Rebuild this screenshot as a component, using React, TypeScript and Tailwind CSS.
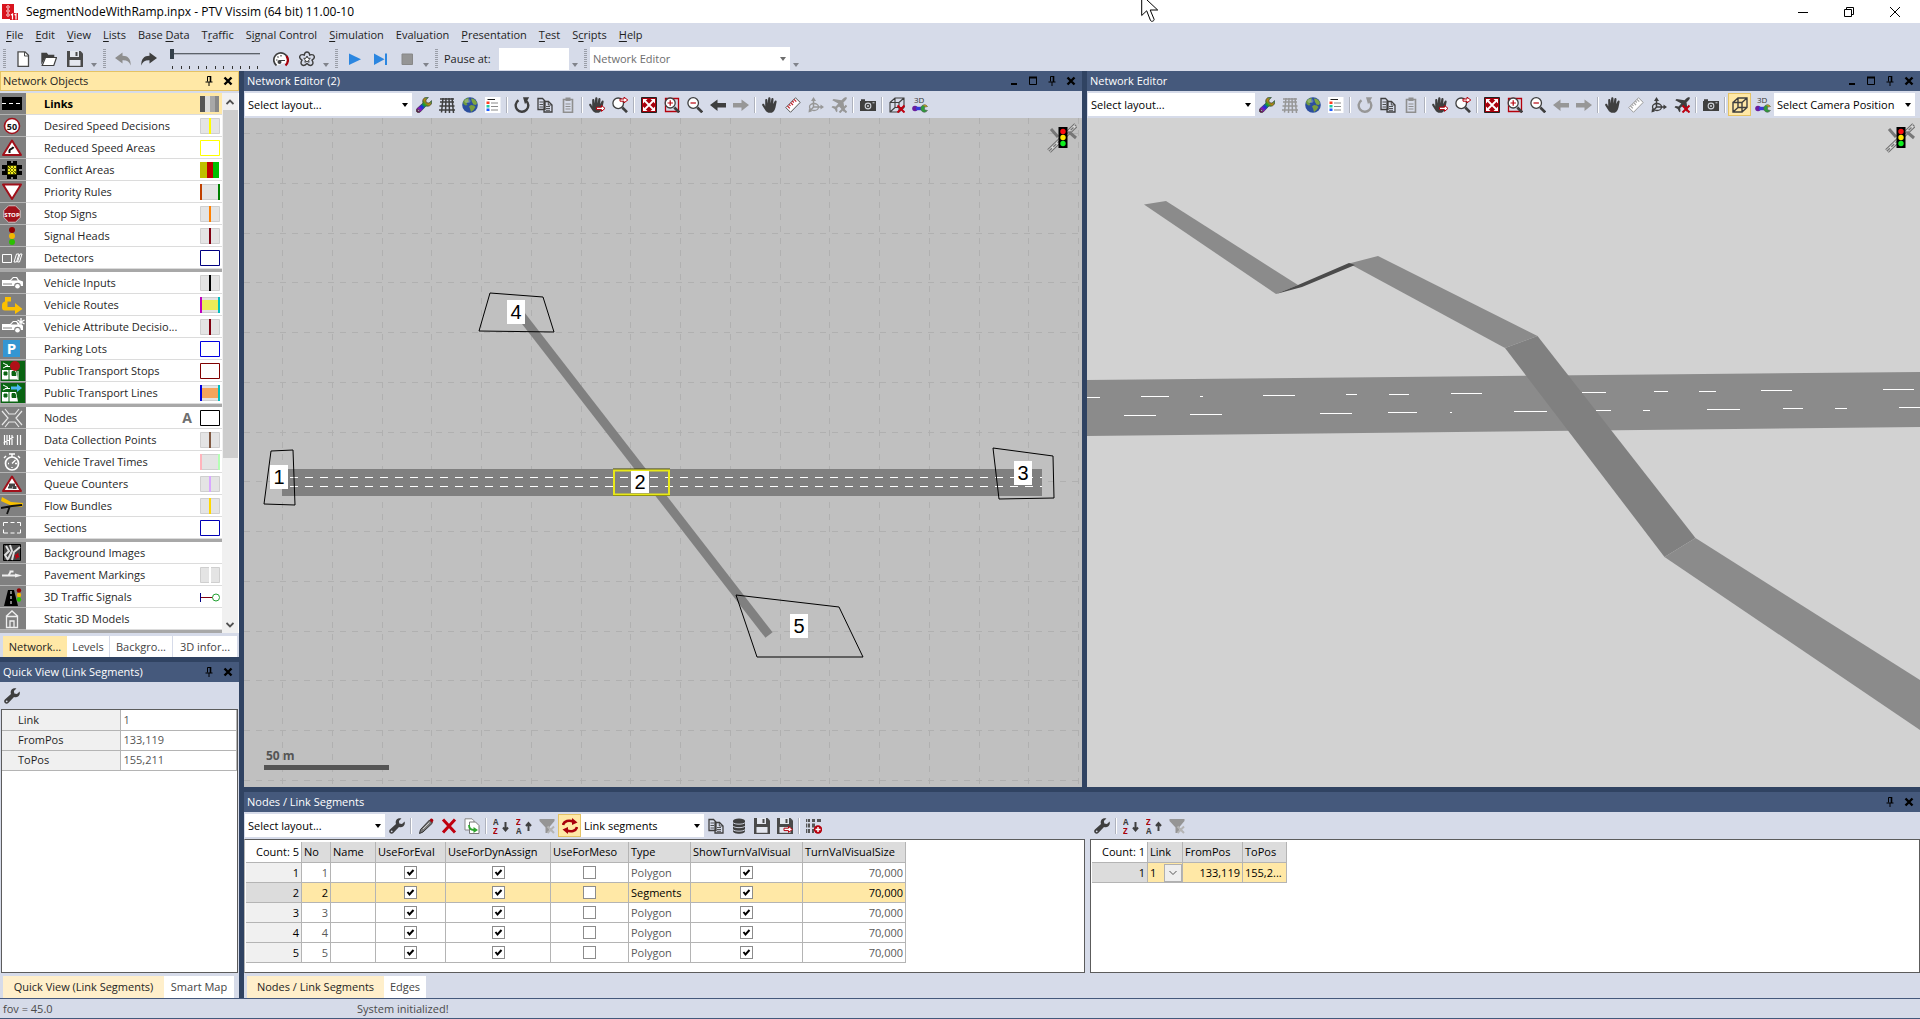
import React from 'react';

type IconProps = { children: React.ReactNode; box?: string; className?: string };

const Icon: React.FC<IconProps> = ({ children, box = '0 0 16 16', className = 'w-4 h-4' }) => (
    <svg viewBox={box} className={`${className} block shrink-0`} fill="none" aria-hidden="true">
        {children}
    </svg>
);

const DARK = '#3f3f3f';
const RED = '#a8000b';

/* ---------- toolbar icons ---------- */

const WRENCH = 'M15.6 3.6 13 6.1 10.3 5.6 9.9 3 12.4.5C10.600-.2 8.600.2 7.500 1.700c-1 1.300-1 3-.5 4.300L.9 11.600c-1 1-1 2.400 0 3.400s2.500 1 3.400 0L10 9c1.500.5 3.200.3 4.400-.8 1.300-1.200 1.700-3 1.200-4.600ZM2.700 14.200a.9.9 0 1 1 0-1.800.9.900 0 0 1 0 1.800Z';

const WrenchIcon = () => <Icon><path d={WRENCH} fill={DARK} /></Icon>;

const ColorWrenchIcon = () => (
    <Icon>
        <defs>
            <linearGradient id="rainbow" x1="1" y1="15" x2="14" y2="2" gradientUnits="userSpaceOnUse">
                <stop offset="0" stopColor="#502020" />
                <stop offset=".2" stopColor="#9010c0" />
                <stop offset=".4" stopColor="#1530e0" />
                <stop offset=".55" stopColor="#10a030" />
                <stop offset=".75" stopColor="#c08010" />
                <stop offset="1" stopColor="#20a050" />
            </linearGradient>
        </defs>
        <path d={WRENCH} fill="url(#rainbow)" stroke="#333" strokeWidth=".6" />
    </Icon>
);

const NetGridIcon = ({ color = DARK }: { color?: string }) => (
    <Icon>
        <path d="M1 2h14M1 5h14M.5 9h15M0 13h16M4 1 2.500 15.500M7 1l-.5 15M10 1l.5 15M13 1l1.500 15" stroke={color} strokeWidth="1.500" />
    </Icon>
);

const GlobeIcon = () => (
    <Icon>
        <circle cx="8" cy="8" r="7.800" fill="#2c4f9e" />
        <path d="M1 4.500C3 1.500 5.500.6 7 1.200L6 3l1 1.500L4.500 6l1 2-2 .5L1.500 7Z" fill="#6f9a3c" />
        <path d="M9 1.500c3 0 5 2 6 4.500l-1 2-2.500-.5L10 5Z" fill="#7fa640" />
        <path d="m9 8 3 .5 1.500 1.500-2 3L9 15l-1-3.500-1-2Z" fill="#7a9e3e" />
        <ellipse cx="5.500" cy="4" rx="3" ry="2" fill="#fff" opacity=".25" />
    </Icon>
);

const LegendIcon = () => (
    <Icon>
        <path d="M0 0h15.500v16H0z" fill="#fff" />
        <path d="M2.500 2.500H10" stroke="#222" />
        <path d="M1.500 4.500h3v2.500h-3z" fill="#ff3b1f" />
        <path d="M1.500 8h3v2.500h-3z" fill="#1fc9a0" />
        <path d="M1.500 11.500h3V14h-3z" fill="#1f5bff" />
        <path d="M6 6h7M6 9.500h7M6 13h7" stroke="#8a8a8a" />
    </Icon>
);

const RefreshIcon = ({ color = DARK }: { color?: string }) => (
    <Icon>
        <path d="M4.500 3.200A6.300 6.300 0 1 0 12 3.600" stroke={color} strokeWidth="2.400" />
        <path d="M9 .3h6.200L11 7.200Z" fill={color} />
    </Icon>
);

const CopyIcon = ({ color = DARK }: { color?: string }) => (
    <Icon>
        <path d="M1 1.500h4.500L8 4v8.500H1zM7 4.500h4.500l3.500 3.500v7H7z" fill="#d6dbe9" stroke={color} strokeWidth="1.300" />
        <path d="M2.500 5H6M2.500 7.500H6M2.500 10H6M9 9.500h4M9 11.500h4M9 13.300h4M11.300 5v3H15" stroke={color} strokeWidth=".9" />
    </Icon>
);

const ClipboardIcon = () => (
    <Icon>
        <path d="M3.500 2.500h9v12.700h-9z" stroke="#8f8f8f" strokeWidth="1.600" />
        <path d="M5.500.5h5V4h-5z" fill="#8f8f8f" />
        <path d="M5.500 7h5M5.500 9.500h5M5.500 12h5" stroke="#8f8f8f" />
    </Icon>
);

const HAND = 'M3.200 9.500V3c0-1.500 2.100-1.500 2.200 0l.3 3.500L6.200 1.500c.1-1.600 2.200-1.600 2.300 0l.2 4.900.6-4.500c.3-1.500 2.300-1.200 2.200.3l-.3 4.900 1.400-2.900c.6-1.300 2.400-.6 2 .8-.7 2.600-.6 5.100-1.900 7.700-.8 1.900-2.200 3.100-4.500 3.100-2.700 0-4-1.200-5-2.900L.3 8.500C-.5 7.100 1.200 6 2.100 7.100Z';

const HandIcon = () => <Icon><path d={HAND} fill={DARK} /></Icon>;

const HandSyncIcon = () => (
    <Icon>
        <path d={HAND} fill={DARK} />
        <path d="M7.500 10.200h5V8.400l3.500 3-3.500 3v-1.800H7.500z" fill="#fff" stroke="#b5000c" />
    </Icon>
);

const ZoomSyncIcon = () => (
    <Icon>
        <circle cx="6.200" cy="6.300" r="5.300" fill="#fff" stroke={DARK} strokeWidth="1.300" />
        <path d="m10.300 10.500 4.700 4.700" stroke={DARK} strokeWidth="2.600" />
        <path d="M8 2h4V.2L15.800 3 12 5.800V4.200H8z" fill="#fff" stroke="#b5000c" />
    </Icon>
);

const FitIcon = () => (
    <Icon>
        <path d="M.5.5h15v15H.5z" fill={RED} stroke="#222" />
        <path d="m4 4 8 8M12 4l-8 8" stroke="#fff" strokeWidth="1.800" />
        <path d="M2 2h4.500L2 6.500ZM14 2v4.500L9.500 2ZM2 14V9.500L6.500 14ZM14 14H9.500L14 9.500Z" fill="#fff" />
    </Icon>
);

const ZoomInIcon = () => (
    <Icon>
        <path d="M1.500 1.500h13v13h-13z" stroke="#b5000c" strokeWidth="1.300" />
        <circle cx="6.200" cy="6" r="5" fill="#fff" stroke={DARK} strokeWidth="1.300" />
        <path d="M6.200 3.300v5.400M3.500 6h5.400" stroke="#b5000c" strokeWidth="1.200" />
        <path d="m10.300 10.500 4.900 4.900" stroke={DARK} strokeWidth="2.600" />
    </Icon>
);

const ZoomOutIcon = () => (
    <Icon>
        <circle cx="6.200" cy="6" r="5.300" fill="#fff" stroke={DARK} strokeWidth="1.300" />
        <path d="M3.500 6h5.400" stroke="#b5000c" strokeWidth="1.200" />
        <path d="m10.300 10.500 4.900 4.900" stroke={DARK} strokeWidth="2.600" />
    </Icon>
);

const BackIcon = ({ color = DARK }: { color?: string }) => (
    <Icon><path d="M0 8 7.500 2.500V6H16v4.500H7.500V14Z" fill={color} /></Icon>
);

const ForwardIcon = () => (
    <Icon><path d="M16 8 8.500 2.500V6H0v4.500h8.500V14Z" fill="#979797" /></Icon>
);

const RulerIcon = ({ off = false }: { off?: boolean }) => (
    <Icon>
        <path d="M10.500.8 15.200 5.400 5.500 15.300.8 10.600Z" fill="#fff" stroke={off ? '#999' : '#555'} />
        <path d="m9 2.300 2.300 2.300M7.300 4l1.500 1.500M5.700 5.700 8 8M4 7.400l1.500 1.500M2.500 9l2.300 2.300" stroke={off ? '#a5a5a5' : '#c4202b'} strokeWidth="1.200" />
    </Icon>
);

const AxesIcon = ({ color = '#979797' }: { color?: string }) => (
    <Icon>
        <path d="M5.500 2v8M5.500 10H14M5.500 10 2 14" stroke={color} strokeWidth="1.500" />
        <path d="M5.500 0 8 4H3ZM16 10l-3.500 2.500v-5ZM.5 15.500 1 11.500l3 2.800Z" fill={color} />
        <ellipse cx="6" cy="10" rx="4.500" ry="3.500" stroke={color} strokeWidth="1.300" />
    </Icon>
);

const PlaneIcon = ({ active = false }: { active?: boolean }) => (
    <Icon>
        <path d="M15.700.5c-1.200-.6-2.700.3-3.700 1.300L10.500 3.300 2.500 2 1.300 3.300l6 3.200L4.700 9.500 1.600 9l-1.100 1.300 3.200 1.800 1.600 3.100 1.200-1-.3-3.100L9 8.700l3.500 6 1.200-1.200-1.200-8.200L14 3.900c1-1 2.300-2.500 1.700-3.400Z" fill={active ? DARK : '#979797'} />
        <path d="m8.500 8.500 7 7M15.500 8.500l-7 7" stroke={active ? '#c00010' : '#979797'} strokeWidth="2" />
    </Icon>
);

const CameraIcon = () => (
    <Icon>
        <path d="M0 4h16v10H0zM1 2.300h4V4H1z" fill={DARK} />
        <circle cx="8" cy="9" r="3.400" fill="#cfd3da" />
        <circle cx="8" cy="9" r="2.300" fill={DARK} />
        <circle cx="8" cy="9" r="1" fill="#cfd3da" />
        <path d="M12.500 5.800h2" stroke="#cfd3da" />
    </Icon>
);

const CUBE = 'M1 5.500h9V15H1zM1 5.500 6 1h9v9.500L10 15M10 5.500 15 1M6 1v9.500M6 10.500h9M1 15l5-4.500';

const CubeOffIcon = () => (
    <Icon>
        <path d={CUBE} stroke={DARK} strokeWidth="1.100" />
        <path d="m8.500 8.500 7 7M15.500 8.500l-7 7" stroke="#c00010" strokeWidth="2" />
    </Icon>
);

const CubeIcon = () => <Icon><path d={CUBE} stroke={DARK} strokeWidth="1.400" /></Icon>;

const Wrench3dIcon = () => (
    <Icon>
        <text x="2" y="6" fontSize="8" fontFamily="Open Sans, sans-serif" fill="#333">3D</text>
        <circle cx="3" cy="11.500" r="2.800" fill="#6a1e9e" />
        <path d="M4 9.800h6v3.400H4z" fill="#3838d8" />
        <path d="M15.500 9.500a3.700 3.700 0 1 0 0 4L12.500 12.800v-2.600Z" fill="#2e9e3a" stroke="#555" strokeWidth=".6" />
        <path d="M11 8.300c1.500-1 3.500-.5 4.500 1.200l-2 .5Z" fill="#b5902a" />
    </Icon>
);

const PencilIcon = () => (
    <Icon>
        <path d="m11.500 2 3 3L5 14l-3.500 1.500L2.500 11.500Z" fill="#777" stroke="#333" />
        <path d="m11.500 2 1.200-1.200c1-.8 3.200 1 2.600 2.300L14 4.800Z" fill="#a8000b" />
        <path d="m5 11 6.500-6.500" stroke="#ccc" />
    </Icon>
);

const DeleteIcon = () => (
    <Icon><path d="m2 1.500 12 13M14 1.500 2 14.500" stroke="#c0000e" strokeWidth="3" /></Icon>
);

const DuplicateIcon = () => (
    <Icon>
        <path d="M1 .8h7l2 2V12H1z" fill="#fff" stroke="#888" />
        <path d="M5.500 4h6L15 7.500v8H5.500z" fill="#fff" stroke="#777" />
        <path d="M5 7c0 3 2 5 5 5" stroke="#2ea52e" strokeWidth="1.800" />
        <path d="M9.500 9 14 12l-4.500 3Z" fill="#2ea52e" />
    </Icon>
);

const SortIcon = ({ top, bottom, up = false }: { top: string; bottom: string; up?: boolean }) => (
    <Icon>
        <text x="0" y="7" fontSize="8" fontWeight="700" fontFamily="Open Sans, sans-serif" fill={up ? RED : DARK}>{top}</text>
        <text x="0" y="15.500" fontSize="8" fontWeight="700" fontFamily="Open Sans, sans-serif" fill={up ? DARK : RED}>{bottom}</text>
        {up ? (
            <path d="M12.500 13V6M10 8l2.500-3L15 8" stroke={DARK} strokeWidth="2" />
        ) : (
            <path d="M12.500 4v7M10 9.500l2.500 3 2.500-3" stroke={DARK} strokeWidth="2" />
        )}
    </Icon>
);

const FilterIcon = () => (
    <Icon>
        <path d="M.5 1h15v2L10 9.500V15H6.500V9.500L.5 3Z" fill="#959595" />
        <path d="m8.500 8.500 6.500 6.500M15 8.500l-6.500 6.500" stroke="#b4b4b4" strokeWidth="2" />
    </Icon>
);

const SwapIcon = () => (
    <Icon>
        <path d="M1 7c1-4 6-5.500 10.500-3.200" stroke={RED} strokeWidth="2.600" />
        <path d="M10 0v7l5.500-2.500Z" fill={RED} />
        <path d="M15 9c-1 4-6 5.500-10.500 3.200" stroke={RED} strokeWidth="2.600" />
        <path d="M6 16V9L.5 11.500Z" fill={RED} />
    </Icon>
);

const DatabaseIcon = () => (
    <Icon>
        <path d="M2 3v10c0 3.700 12 3.700 12 0V3Z" fill={DARK} />
        <ellipse cx="8" cy="3" rx="6" ry="2.500" fill={DARK} />
        <path d="M2 4.500c1 2.200 11 2.200 12 0M2 8c1 2.200 11 2.200 12 0M2 11.500c1 2.200 11 2.200 12 0" stroke="#c9cdd8" />
    </Icon>
);

const SaveIcon = ({ arrow = false }: { arrow?: boolean }) => (
    <Icon>
        <path d="M0 0h13.500L16 2.500V16H0Z" fill="#4a4a4a" />
        <path d="M3 0h9v6H3z" fill="#e4e7ef" />
        <path d="M8.500 1h2v4h-2z" fill="#4a4a4a" />
        <path d="M2.500 9h11v5.800h-11z" fill="#e4e7ef" />
        {arrow && <path d="M7 10.200h4.500V8.400l4 3-4 3v-1.800H7z" fill="#fff" stroke="#b5000c" />}
    </Icon>
);

const AttributesIcon = () => (
    <Icon>
        <path d="M0 1h4v3H0zM6 1h3v3H6zM11 1h4v3h-4zM0 5.500h4v4H0zM6 5.500h3v4H6zM0 11h4v4H0zM6 11h2v4H6z" fill="#555" />
        <path d="M1.500 0v16" stroke="#d6dbe9" strokeWidth=".7" />
        <circle cx="12" cy="11.500" r="4.200" fill="#b5000c" />
        <path d="M12 9v5M9.500 11.500h5" stroke="#fff" strokeWidth="1.400" />
    </Icon>
);

/* ---------- main toolbar icons ---------- */

const NewIcon = () => (
    <Icon><path d="M3 .8h7l3.500 3.500v11H3z" fill="#fff" stroke="#4a4a4a" strokeWidth="1.300" /><path d="M9.500 1v4h4" stroke="#4a4a4a" /></Icon>
);
const OpenIcon = () => (
    <Icon>
        <path d="M.3 1.800h5.500l1.500 2h6v2.400H4.500L.3 13.500Z" fill={DARK} />
        <path d="M4.500 6.500h11L12.800 14.500H1.200Z" fill="#fff" stroke={DARK} strokeWidth="1.200" />
    </Icon>
);
const UndoIcon = ({ flip = false }: { flip?: boolean }) => (
    <Icon>
        <path transform={flip ? 'matrix(-1 0 0 1 16 0)' : undefined} d="M0 7 7.500 1.500v3.300C13 4.800 16 8 15.700 14.500 14.500 10.800 12 9 7.500 9.200v3.300Z" fill={flip ? DARK : '#8e8e8e'} />
    </Icon>
);
const GaugeIcon = () => (
    <Icon>
        <path d="M3.500 14.500A7 7 0 1 1 14.500 11" stroke={DARK} strokeWidth="1.700" fill="#fff" />
        <path d="M13.500 5A7 7 0 0 1 12.500 14.500" stroke={RED} strokeWidth="2.200" />
        <path d="M6 9.500h6M4.500 5.500l1 1M3 9h1.500M8 4v1.500" stroke={DARK} strokeWidth="1.200" />
        <circle cx="6.500" cy="11" r="2" fill={DARK} />
    </Icon>
);
const FlowerIcon = () => (
    <Icon>
        <path d="M8 1c1.500 0 2.500 1.200 2.700 3 2-.6 4-.2 4.500 1.200s-.5 3-2.200 4c1 1.600 1.300 3.700 0 4.700s-3.300.3-5-1.500c-1.700 1.800-3.700 2.500-5 1.500s-1-3.100 0-4.700c-1.700-1-2.700-2.600-2.200-4s2.500-1.800 4.500-1.200C5.500 2.200 6.500 1 8 1Z" stroke={DARK} strokeWidth="1.400" />
        <path d="m8 5 1 2.200 2.300.2-1.700 1.600.5 2.300L8 10.100l-2.100 1.200.5-2.300-1.700-1.600 2.300-.2Z" stroke={DARK} fill="#fff" />
    </Icon>
);
const PlayIcon = () => <Icon><path d="M2 2.500 14 8.300 2 14Z" fill="#2b86e0" /></Icon>;
const StepIcon = () => <Icon><path d="M1 2.500 11.500 8.300 1 14ZM12 2.500h2V14h-2z" fill="#2b86e0" /></Icon>;
const StopIcon = () => <Icon><path d="M3 3h10.500v10.500H3z" fill="#959595" stroke="#888" /></Icon>;

/* ---------- shared bits ---------- */

const Grip = () => (
    <svg className="w-[3px] h-5 shrink-0" aria-hidden="true">
        <path d="M1.500 0v20" stroke="#9a9ea8" strokeWidth="3" strokeDasharray="1 1" />
    </svg>
);

const Overflow = () => (
    <button className="w-3 h-[25px] flex items-end justify-center pb-1 shrink-0" aria-label="Toolbar options">
        <svg viewBox="0 0 6 4" className="w-[6px] h-[4px]" aria-hidden="true"><path d="M0 0h6L3 4Z" fill="#80838b" /></svg>
    </button>
);

const Sep = () => <span className="w-[2px] h-4 mx-[2px] bg-white border-l border-[#aeb2bd] shrink-0" />;

const Tool: React.FC<{ label: string; active?: boolean; children: React.ReactNode }> = ({ label, active, children }) => (
    <button
        aria-label={label}
        className={
            active
                ? 'w-[23px] h-[23px] flex items-center justify-center shrink-0 bg-[#ffe8a6] border border-[#e5c365]'
                : 'w-[23px] h-[23px] flex items-center justify-center shrink-0'
        }
    >
        {children}
    </button>
);

const Select: React.FC<{ label: string; value: string; width: string; gray?: boolean }> = ({ label, value, width, gray }) => (
    <span className={`relative flex h-[23px] shrink-0 bg-white ${width}`}>
        <select
            aria-label={label}
            className={`appearance-none w-full h-full pl-[3px] pr-4 bg-white outline-none ${gray ? 'text-[#6d6d6d]' : 'text-black'}`}
        >
            <option>{value}</option>
        </select>
        <svg viewBox="0 0 6 4" className="absolute right-1 top-[10px] w-[6px] h-[4px] pointer-events-none" aria-hidden="true">
            <path d="M0 0h6L3 4Z" fill={gray ? '#6d6d6d' : '#000'} />
        </svg>
    </span>
);

const PanelHeader: React.FC<{ title: string; active?: boolean; full?: boolean }> = ({ title, active, full }) => (
    <header
        className={
            active
                ? 'h-5 flex items-center pl-[2px] pr-px border border-[#e5c365] bg-[#ffe8a6] text-[#1e1e1e] shrink-0'
                : 'h-5 flex items-center pl-[3px] pr-[2px] bg-[#45597c] text-white shrink-0'
        }
    >
        <h2 className="flex-1">{title}</h2>
        <div className="flex text-black">
            {full && (
                <>
                    <button aria-label="Minimize" className="w-[19px] h-4 flex items-center justify-center">
                        <Icon box="0 0 10 10" className="w-[10px] h-[10px]"><path d="M2 7h6v2H2z" fill="#000" /></Icon>
                    </button>
                    <button aria-label="Maximize" className="w-[19px] h-4 flex items-center justify-center">
                        <Icon box="0 0 10 10" className="w-[10px] h-[10px]"><path d="M1.500 1.500h7v7h-7z" stroke="#000" /><path d="M1 1.500h8" stroke="#000" strokeWidth="2" /></Icon>
                    </button>
                </>
            )}
            <button aria-label="Pin" className="w-[19px] h-4 flex items-center justify-center">
                <Icon box="0 0 10 10" className="w-[10px] h-[10px]"><path d="M3.500 5.500v-5h3M1.500 6h7M5 6v4" stroke="#000" /><path d="M6.500 0v6" stroke="#000" strokeWidth="1.600" /></Icon>
            </button>
            <button aria-label="Close" className="w-[19px] h-4 flex items-center justify-center">
                <Icon box="0 0 10 10" className="w-[10px] h-[10px]"><path d="m1.500 1.500 7 7M8.500 1.500l-7 7" stroke="#000" strokeWidth="2.400" /></Icon>
            </button>
        </div>
    </header>
);

/* ---------- menu and main toolbar ---------- */

// "_" stands before the mnemonic letter
const menus = ['_File', '_Edit', '_View', '_Lists', 'Base _Data', 'T_raffic', 'S_ignal Control', '_Simulation', 'Eval_uation', '_Presentation', '_Test', 'S_cripts', '_Help'];

const TitleBar = () => (
    <div className="h-[23px] bg-white flex items-center pl-[2px] pr-[2px] shrink-0">
        <Icon>
            <path d="M0 0h12v15H0z" fill="#d9141e" />
            <circle cx="6" cy="3" r="1.300" stroke="#fff" strokeWidth=".8" />
            <circle cx="6" cy="7" r="1.300" stroke="#fff" strokeWidth=".8" />
            <circle cx="6" cy="11" r="1.300" stroke="#fff" strokeWidth=".8" />
            <path d="M8 9h8v7H8z" fill="#d9141e" />
            <path d="m9 11 1.500-1v5.500M12.500 11l1.500-1v5.500" stroke="#fff" strokeWidth="1.200" />
        </Icon>
        <h1 className="pl-2 flex-1 text-xs">SegmentNodeWithRamp.inpx - PTV Vissim (64 bit) 11.00-10</h1>
        <div className="flex">
            <button aria-label="Minimize" className="w-[46px] h-[23px] flex items-center justify-center">
                <Icon box="0 0 10 10" className="w-[10px] h-[10px]"><path d="M0 5.500h10" stroke="#000" /></Icon>
            </button>
            <button aria-label="Restore" className="w-[46px] h-[23px] flex items-center justify-center">
                <Icon box="0 0 10 10" className="w-[10px] h-[10px]"><path d="M.5 2.500h7v7h-7zM2.500 2.500v-2h7v7h-2" stroke="#000" /></Icon>
            </button>
            <button aria-label="Close" className="w-[46px] h-[23px] flex items-center justify-center">
                <Icon box="0 0 10 10" className="w-[10px] h-[10px]"><path d="m0 0 10 10M10 0 0 10" stroke="#000" /></Icon>
            </button>
        </div>
    </div>
);

const MenuBar = () => (
    <nav className="h-[23px] flex items-center shrink-0">
        {menus.map(menu => {
            const [before, rest] = menu.split('_');
            return (
                <button key={menu} className="px-[6px] text-[#1e1e1e]">
                    {before}
                    <u className="underline-offset-2">{rest[0]}</u>
                    {rest.slice(1)}
                </button>
            );
        })}
    </nav>
);

const BigTool: React.FC<{ label: string; children: React.ReactNode }> = ({ label, children }) => (
    <button aria-label={label} className="w-[26px] h-[25px] flex items-center justify-center shrink-0">{children}</button>
);

const MainToolbar = () => (
    <div className="h-[25px] flex items-center pl-[3px] shrink-0">
        <Grip />
        <div className="flex pl-1">
            <BigTool label="New"><NewIcon /></BigTool>
            <BigTool label="Open"><OpenIcon /></BigTool>
            <BigTool label="Save"><SaveIcon /></BigTool>
            <Overflow />
        </div>
        <span className="w-[3px]" />
        <Grip />
        <div className="flex items-center pl-1">
            <BigTool label="Undo"><UndoIcon /></BigTool>
            <BigTool label="Redo"><UndoIcon flip /></BigTool>
            <div className="w-[90px] h-5 mx-2 flex flex-col justify-between">
                <input
                    type="range"
                    aria-label="Simulation speed"
                    defaultValue={0}
                    className="appearance-none w-full h-[10px] bg-linear-to-b from-transparent from-40% via-[#333a3f] via-40% to-transparent to-60% [&::-webkit-slider-thumb]:appearance-none [&::-webkit-slider-thumb]:w-1 [&::-webkit-slider-thumb]:h-[10px] [&::-webkit-slider-thumb]:bg-[#333f4a]"
                />
                <div className="flex justify-between pl-[2px] pr-[2px]">
                    {Array.from({ length: 11 }, (_, i) => <span key={i} className="w-px h-[3px] bg-[#333]" />)}
                </div>
            </div>
            <BigTool label="Simulation speed factor"><GaugeIcon /></BigTool>
            <BigTool label="Quick mode"><FlowerIcon /></BigTool>
            <Overflow />
        </div>
        <span className="w-[3px]" />
        <Grip />
        <div className="flex pl-1">
            <BigTool label="Run"><PlayIcon /></BigTool>
            <BigTool label="Single step"><StepIcon /></BigTool>
            <BigTool label="Stop"><StopIcon /></BigTool>
            <Overflow />
        </div>
        <span className="w-[3px]" />
        <Grip />
        <label htmlFor="pause" className="w-[61px] pl-[6px] text-[#1e1e1e]">Pause at:</label>
        <input id="pause" className="w-[70px] h-[22px] bg-white outline-none" />
        <Overflow />
        <span className="w-[3px]" />
        <Grip />
        <span className="w-[3px]" />
        <Select label="Editor" value="Network Editor" width="w-[200px]" gray />
        <Overflow />
    </div>
);

/* ---------- network objects ---------- */

const barSwatch = (color: string) => (
    <>
        <path d="M.5.5h19v15H.5z" fill="#e4e4e4" stroke="#cfcfcf" />
        <path d="M9 0h2v16H9z" fill={color} />
    </>
);
const boxSwatch = (color: string) => <path d="M.5.5h19v15H.5z" fill="#fff" stroke={color} />;
const edgeSwatch = (left: string, right: string, fill?: string) => (
    <>
        <path d="M.5.5h19v15H.5z" fill="#e4e4e4" stroke="#cfcfcf" />
        {fill && <path d="M1 3h18v10H1z" fill={fill} />}
        <path d="M0 0h2v16H0z" fill={left} />
        <path d="M18 0h2v16h-2z" fill={right} />
    </>
);

const car = (
    <>
        <path d="M0 6h8l3-3h4l2 3 4 1.500V12H0z" fill="#fff" />
        <path d="M9 6.500 11.500 4h2.700l1.500 2.500Z" fill="#808080" />
        <circle cx="15.500" cy="12" r="3.300" fill="#808080" />
        <circle cx="15.500" cy="12.200" r="2.300" fill="#fff" />
        <path d="M1 10h9" stroke="#808080" />
    </>
);

const tram = (
    <>
        <path d="M-3-2h26v22H-3z" fill="#0a6412" />
        <path d="M1 1l5 2.500L1 6M8 4.500H3" stroke="#fff" />
        <path d="M0 8h14l2 9.500H0z" fill="#fff" />
        <path d="M2 10h3v3H2zM10 9.500h3l1 4h-4zM7 8v10" fill="#0a6412" stroke="#0a6412" />
    </>
);

type NetworkObject = { name: string; icon: React.ReactNode; swatch?: React.ReactNode; auto?: boolean };

const objectGroups: NetworkObject[][] = [
    [
        {
            name: 'Links',
            icon: <><path d="M0 2h20v13H0z" fill="#000" /><path d="M0 8.500h20" stroke="#fff" strokeWidth="1.200" strokeDasharray="4 3" /></>,
            swatch: <><path d="M0 0h5v16H0z" fill="#555" /><path d="M5 0h5v16H5z" fill="#dcdcdc" /><path d="M10 0h5v16h-5z" fill="#a8a8a8" /><path d="M15 0h4v16h-4z" fill="#888" /></>,
        },
        {
            name: 'Desired Speed Decisions',
            icon: <><circle cx="10" cy="9" r="7.500" fill="#fff" stroke="#a0101a" strokeWidth="1.600" /><text x="10" y="12.500" textAnchor="middle" fontSize="9" fontWeight="700" fontFamily="Open Sans, sans-serif" fill="#111">50</text></>,
            swatch: barSwatch('#ffff00'),
        },
        {
            name: 'Reduced Speed Areas',
            icon: <><path d="M10 1.500 19 16H1Z" fill="#fff" stroke="#a0101a" strokeWidth="2" strokeLinejoin="round" /><path d="M7.500 14v-2.500c.3-1.800 3-1.500 4-3.500" stroke="#111" strokeWidth="2" /></>,
            swatch: boxSwatch('#ffff00'),
        },
        {
            name: 'Conflict Areas',
            icon: <><path d="M5 0h10v4h5v10h-5v4H5v-4H0V4h5z" fill="#000" /><path d="M5.500 4.500h9v9h-9z" fill="#6b6b00" /><path d="M6 5l8 8M9 5l5 5M6 8l5 5M12 5l2 2M6 11l2 2M14 5l-8 8M11 5 6 10M14 8l-5 5" stroke="#f2ee20" /><path d="M10 0v2M10 16v2M0 9h3M17 9h3" stroke="#fff" /></>,
            swatch: <><path d="M0 0h7v16H0z" fill="#bfbf00" /><path d="M7 0h6v16H7z" fill="#c00000" /><path d="M13 0h6v16h-6z" fill="#00c000" /></>,
        },
        {
            name: 'Priority Rules',
            icon: <path d="M1 1.500h18L10 16Z" fill="#fff" stroke="#a0101a" strokeWidth="2" strokeLinejoin="round" />,
            swatch: edgeSwatch('#c04000', '#008000'),
        },
        {
            name: 'Stop Signs',
            icon: <><path d="M6.500.8h7l4.700 4.700v7l-4.700 4.700h-7l-4.700-4.700v-7Z" fill="#a0101a" stroke="#ddd" strokeWidth=".8" /><text x="10" y="11.500" textAnchor="middle" fontSize="6" fontWeight="700" fontFamily="Open Sans, sans-serif" fill="#fff">STOP</text></>,
            swatch: barSwatch('#ff8000'),
        },
        {
            name: 'Signal Heads',
            icon: <><circle cx="10" cy="3" r="3" fill="#900000" /><circle cx="10" cy="9" r="3" fill="#f2b600" /><circle cx="10" cy="15" r="3" fill="#2ac000" /></>,
            swatch: barSwatch('#800010'),
        },
        {
            name: 'Detectors',
            icon: <path d="M.5 5.500h9v8h-9zM12 13l2.500-8H17l-2.500 8zM15.500 13 18 5h2l-2.500 8z" stroke="#fff" />,
            swatch: boxSwatch('#000080'),
        },
    ],
    [
        { name: 'Vehicle Inputs', icon: car, swatch: barSwatch('#000') },
        {
            name: 'Vehicle Routes',
            icon: <path d="M3 1h6v4.500H5.500V11H13V7l7.500 6-7.500 5v-3.500H3C.8 14.500 0 13.300 0 11.500V9c0-2 1-3 3-3.500Z" fill="#fcc000" />,
            swatch: edgeSwatch('#c000c0', '#00c0c0', '#ecec58'),
        },
        {
            name: 'Vehicle Attribute Decisio...',
            icon: <>{car}<path d="M19 0v8M15.500 2l7 4M22.500 2l-7 4" stroke="#fff" strokeWidth="1.300" /></>,
            swatch: barSwatch('#800010'),
        },
        {
            name: 'Parking Lots',
            icon: <><path d="M1 0h17v17H1z" fill="#3496d2" /><text x="9.500" y="14" textAnchor="middle" fontSize="15" fontWeight="700" fontFamily="Open Sans, sans-serif" fill="#fff">P</text></>,
            swatch: boxSwatch('#0000e0'),
        },
        {
            name: 'Public Transport Stops',
            icon: <>{tram}<circle cx="13" cy="4" r="5" fill="#b01018" /><path d="M16 9v9" stroke="#fff" /></>,
            swatch: boxSwatch('#800000'),
        },
        {
            name: 'Public Transport Lines',
            icon: <>{tram}<path d="M9 2.500h6V0l5 4-5 4V5.500H9z" fill="#4ab8f0" /></>,
            swatch: edgeSwatch('#0000e0', '#00c0c0', '#f4a45c'),
        },
    ],
    [
        {
            name: 'Nodes',
            icon: <path d="M3 0l4 5h6l4-5M3 18l4-5h6l4 5M0 2l6 7-6 7M20 2l-6 7 6 7" stroke="#e8e8e8" strokeWidth="1.200" />,
            swatch: boxSwatch('#000'),
            auto: true,
        },
        {
            name: 'Data Collection Points',
            icon: <path d="M2.500 4v10M5 4v10M7.500 4v10M10 4v10M15.500 4v10M18.500 4v10M1.500 12 11.500 6" stroke="#fff" strokeWidth="1.200" />,
            swatch: barSwatch('#805840'),
        },
        {
            name: 'Vehicle Travel Times',
            icon: <><circle cx="10" cy="10.500" r="6.500" stroke="#fff" strokeWidth="1.700" /><path d="M7 1h6M10 1v3M10 10.500 13.500 7M16 3l2 2M4 3 2 5M6 10.500h1M10 14v1M13 10.500h2" stroke="#fff" strokeWidth="1.400" /></>,
            swatch: edgeSwatch('#ffb4bc', '#b4ffb4'),
        },
        {
            name: 'Queue Counters',
            icon: <><path d="M10 1.500 19 16H1Z" fill="#fff" stroke="#a0101a" strokeWidth="2" strokeLinejoin="round" /><path d="M7 8.500h6v3H7zM6 11.500h4v2H6zM10.500 11h4v3h-4z" fill="#444" /></>,
            swatch: barSwatch('#d8a8ff'),
        },
        {
            name: 'Flow Bundles',
            icon: <><path d="M0 0l9 5 12 1-1 4-10-1L-1 4Z" fill="#f8c000" /><path d="M-1 11 10 9l10-1M8 9l-3 8" stroke="#111" strokeWidth="1.800" /></>,
            swatch: barSwatch('#ffd800'),
        },
        {
            name: 'Sections',
            icon: <path d="M1.500 7V3.500H6M8.500 3.500h4M15 3.500h3.500V7M18.500 10.500V14H15M12.500 14h-4M6 14H1.500v-3.500" stroke="#fff" />,
            swatch: boxSwatch('#0000b4'),
        },
    ],
    [
        {
            name: 'Background Images',
            icon: <><path d="M1.500.5h17v16h-17z" fill="#444" stroke="#000" /><path d="M4 2l3 5-4 4 3 5M8 1l2 6-4 8M18 3l-6 5-2 8" stroke="#ddd" strokeWidth="2" /><path d="m13 11 4 2M16 9.500l-2 5" stroke="#c00010" strokeWidth="1.800" /></>,
        },
        {
            name: 'Pavement Markings',
            icon: <><path d="M0 9.500h14M6.500 9.500 9 5M7.500 5.500h4" stroke="#eee" strokeWidth="1.800" /><path d="M13 7.500 20 9.500l-7 2Z" fill="#eee" /></>,
            swatch: barSwatch('#ffffff'),
        },
        {
            name: '3D Traffic Signals',
            icon: <><path d="M6 2h6l4 16H2Z" fill="#000" /><path d="M9 3v14" stroke="#fff" strokeDasharray="3 2" /><circle cx="17" cy="2.500" r="2.200" fill="#900000" /><circle cx="17" cy="7" r="2.200" fill="#f2b600" /><circle cx="17" cy="11.500" r="2.200" fill="#2ac000" /></>,
            swatch: <><path d="M.5 4v9" stroke="#000080" /><path d="M1 8.500h12" stroke="#800010" /><circle cx="16" cy="8.500" r="3.500" fill="#fff" stroke="#20a030" /></>,
        },
        {
            name: 'Static 3D Models',
            icon: <path d="M4.500 6.500h11v11h-11zM4 6.500 10 1l6 5.500M8 17v-6h4v6" stroke="#eee" strokeWidth="1.300" />,
        },
    ],
];

const ObjectRow: React.FC<{ object: NetworkObject; selected: boolean }> = ({ object, selected }) => (
    <li className="h-[22px] flex">
        <span className="w-[26px] bg-[#808080] border-b border-[#b4b4b4] flex items-center justify-center overflow-hidden">
            <Icon box="-1 -1 24 20" className="w-6 h-5">{object.icon}</Icon>
        </span>
        <button
            className={
                selected
                    ? 'flex-1 flex items-center pl-[18px] pr-[2px] text-left bg-[#ffe8a6] border-b border-[#dcdcdc] text-black font-bold'
                    : 'flex-1 flex items-center pl-[18px] pr-[2px] text-left bg-white border-b border-[#dcdcdc] text-[#262626]'
            }
        >
            <span className="flex-1">{object.name}</span>
            {object.auto && <b className="text-sm text-[#6e6e6e] pr-2">A</b>}
            {object.swatch && <Icon box="0 0 20 16" className="w-5 h-4">{object.swatch}</Icon>}
        </button>
    </li>
);

const NetworkObjects = () => (
    <section className="flex-1 min-h-0 flex flex-col bg-[#d6dbe9]">
        <PanelHeader title="Network Objects" active />
        <div className="flex-1 min-h-0 mt-[2px] flex bg-white">
            <div className="flex-1 min-h-0 overflow-hidden">
                {objectGroups.map((group, i) => (
                    <ul key={i} className="border-b-[3px] border-[#a8a8a8]">
                        {group.map(object => (
                            <ObjectRow key={object.name} object={object} selected={object.name === 'Links'} />
                        ))}
                    </ul>
                ))}
            </div>
            <div className="w-4 bg-[#f0f0f0] flex flex-col items-center mr-px">
                <button aria-label="Scroll up" className="w-4 h-[17px] flex items-center justify-center">
                    <Icon box="0 0 8 6" className="w-2 h-[6px]"><path d="m.5 5 3.500-3.500L7.500 5" stroke="#505050" strokeWidth="1.800" /></Icon>
                </button>
                <div className="w-[15px] flex-[348] bg-[#cdcdcd]" />
                <div className="flex-[158]" />
                <button aria-label="Scroll down" className="w-4 h-[17px] flex items-center justify-center">
                    <Icon box="0 0 8 6" className="w-2 h-[6px]"><path d="m.5 1 3.500 3.500L7.500 1" stroke="#505050" strokeWidth="1.800" /></Icon>
                </button>
            </div>
        </div>
        <div role="tablist" className="h-6 pt-[3px] pl-[3px] pr-[2px] flex text-[#444]">
            <button role="tab" aria-selected="true" className="w-16 bg-[#ffe8a6] text-[#1e1e1e]">Network...</button>
            <button role="tab" className="w-[43px] bg-white border-r border-[#d6dbe9]">Levels</button>
            <button role="tab" className="w-[63px] bg-white border-r border-[#d6dbe9]">Backgro...</button>
            <button role="tab" className="flex-1 bg-white">3D infor...</button>
        </div>
    </section>
);

const quickView = [
    ['Link', '1'],
    ['FromPos', '133,119'],
    ['ToPos', '155,211'],
];

const QuickView = () => (
    <section className="h-[336px] flex flex-col bg-[#d6dbe9] shrink-0">
        <PanelHeader title="Quick View (Link Segments)" />
        <div className="h-[27px] flex items-center shrink-0">
            <Tool label="Configure"><WrenchIcon /></Tool>
        </div>
        <div className="flex-1 mx-px border border-[#5c5c5c] bg-white">
            <table className="w-full table-fixed border-collapse">
                <tbody>
                    {quickView.map(([name, value]) => (
                        <tr key={name} className="h-5 border-b border-[#b4b4b4]">
                            <th scope="row" className="w-[118px] pl-4 text-left font-normal bg-[#f0f0f0] text-[#1e1e1e] border-r border-[#b4b4b4]">{name}</th>
                            <td className="pl-[3px] text-[#555] border-r border-[#b4b4b4]">{value}</td>
                        </tr>
                    ))}
                </tbody>
            </table>
        </div>
        <div role="tablist" className="h-[25px] pt-[3px] pl-[3px] flex shrink-0">
            <button role="tab" aria-selected="true" className="w-[161px] bg-[#ffefcb] text-[#1e1e1e]">Quick View (Link Segments)</button>
            <button role="tab" className="w-[70px] bg-white text-[#444]">Smart Map</button>
        </div>
    </section>
);

/* ---------- network editors ---------- */

const EditorToolbar: React.FC<{ mode3d?: boolean }> = ({ mode3d }) => (
    <div className="h-[27px] flex items-center pl-px bg-[#d6dbe9] shrink-0">
        <Select label="Layout" value="Select layout..." width="w-[167px]" />
        <Tool label="Edit graphic parameters"><ColorWrenchIcon /></Tool>
        <Tool label="Wireframe"><NetGridIcon color={mode3d ? '#979797' : DARK} /></Tool>
        <Tool label="Background map"><GlobeIcon /></Tool>
        <Tool label="Legend"><LegendIcon /></Tool>
        <Sep />
        <Tool label="Refresh"><RefreshIcon color={mode3d ? '#979797' : DARK} /></Tool>
        <Tool label="Copy"><CopyIcon /></Tool>
        <Tool label="Paste"><ClipboardIcon /></Tool>
        <Sep />
        <Tool label="Synchronize pan"><HandSyncIcon /></Tool>
        <Tool label="Synchronize zoom"><ZoomSyncIcon /></Tool>
        <Sep />
        <Tool label="Show entire network"><FitIcon /></Tool>
        <Tool label="Zoom in"><ZoomInIcon /></Tool>
        <Tool label="Zoom out"><ZoomOutIcon /></Tool>
        <Tool label="Previous view"><BackIcon color={mode3d ? '#979797' : DARK} /></Tool>
        <Tool label="Next view"><ForwardIcon /></Tool>
        <Sep />
        <Tool label="Pan"><HandIcon /></Tool>
        <Tool label="Measure distance"><RulerIcon off={mode3d} /></Tool>
        <Tool label="Rotate"><AxesIcon color={mode3d ? DARK : '#979797'} /></Tool>
        <Tool label="Flight mode"><PlaneIcon active={mode3d} /></Tool>
        <Sep />
        <Tool label="Screenshot"><CameraIcon /></Tool>
        <Sep />
        <Tool label="3D mode" active={mode3d}>{mode3d ? <CubeIcon /> : <CubeOffIcon />}</Tool>
        <Tool label="3D graphic parameters"><Wrench3dIcon /></Tool>
        {mode3d && <Select label="Camera position" value="Select Camera Position" width="w-[141px]" />}
    </div>
);

const TrafficLight = () => (
    <svg viewBox="0 0 30 30" className="absolute top-[5px] right-[5px] w-[30px] h-[30px]" fill="none" aria-hidden="true">
        <path d="M2 28 29 2" stroke="#6f6f6f" strokeWidth="5" />
        <path d="M2 28 29 2" stroke="#d8d8d8" strokeWidth="3" />
        <path d="M2 28 29 2" stroke="#777" strokeWidth="1.300" strokeDasharray="4 2" />
        <path d="m4 6 7 8M22 9l7 6" stroke="#777" strokeWidth="3" />
        <path d="M11.500 4h9v21h-9z" fill="#000" />
        <circle cx="16" cy="8.500" r="2.700" fill="#ff1010" />
        <circle cx="16" cy="14.500" r="2.700" fill="#ffe800" />
        <circle cx="16" cy="20.500" r="2.700" fill="#10f020" />
    </svg>
);

const nodes = [
    { no: 1, x: 35, y: 359, shape: '27,333 49,332 51,387 20,386' },
    { no: 3, x: 779, y: 355, shape: '749,330 809,338 810,380 755,381' },
    { no: 4, x: 272, y: 194, shape: '246,175 299,179 310,214 235,213' },
    { no: 5, x: 555, y: 508, shape: '492,477 595,489 619,539 513,539' },
];

const NodeLabel: React.FC<{ no: number; x: number; y: number; h?: number }> = ({ no, x, y, h = 24 }) => (
    <>
        <rect x={x - 9} y={y - h / 2} width="18" height={h} fill="#fff" />
        <text x={x} y={y + 7} textAnchor="middle" fontSize="20" fontFamily="Liberation Sans, Arial, sans-serif" fill="#000">{no}</text>
    </>
);

const gridX = Array.from({ length: 17 }, (_, i) => Math.round(38 + i * 49.75) + 0.5);
const gridY = Array.from({ length: 14 }, (_, i) => Math.round(15 + i * 49.75) + 0.5);

const Network2d = () => (
    <svg viewBox="0 0 838 669" className="block w-full h-full" fill="none" role="img" aria-label="Network in 2D">
        <g stroke="#b0b0b0" strokeDasharray="6 6">
            {gridX.map(x => <path key={x} d={`M${x} 0V669`} />)}
            {gridY.map(y => <path key={y} d={`M0 ${y}H838`} />)}
        </g>
        <path d="M38 351h760v27H38z" fill="#808080" />
        <path d="m276 196 249 321" stroke="#808080" strokeWidth="9" />
        <path d="M46 359.500h752M46 368.500h752" stroke="#fff" strokeDasharray="8 7" />
        {nodes.map(n => <polygon key={n.no} points={n.shape} stroke="#000" />)}
        {nodes.map(n => <NodeLabel key={n.no} no={n.no} x={n.x} y={n.y} />)}
        <path d="M369 351h57M369 377.500h57" stroke="#404000" />
        <path d="M370 352.500h55v24h-55z" stroke="#e8e818" strokeWidth="2" />
        <NodeLabel no={2} x={396} y={364} h={22} />
        <text x="22" y="642" fontSize="12" fontWeight="700" fontFamily="Open Sans, sans-serif" fill="#555">50 m</text>
        <path d="M20 647h125v5H20z" fill="#555" />
    </svg>
);

// lane marking dashes: [x1, x2, y]
const dashes = [
    [0, 13, 279], [54, 82, 278], [113, 116, 278], [176, 208, 277], [259, 270, 276], [302, 322, 276],
    [364, 395, 275], [495, 519, 274], [567, 581, 273], [612, 629, 273], [674, 705, 272], [796, 827, 271],
    [37, 69, 297], [103, 135, 296], [233, 265, 295], [301, 330, 294], [363, 365, 294], [427, 460, 293],
    [509, 524, 292], [556, 563, 292], [620, 653, 291], [696, 716, 290], [748, 760, 290], [812, 833, 289],
];

const Network3d = () => (
    <svg viewBox="0 0 833 669" className="block w-full h-full" role="img" aria-label="Network in 3D">
        <path d="M0 262 833 254V309L0 318Z" fill="#8b8b8b" />
        {dashes.map(([x1, x2, y]) => <path key={`${x1}-${y}`} d={`M${x1} ${y + 0.5}H${x2}`} stroke="#fff" />)}
        <path d="M57 86.500 79 83 211 167 189 176Z" fill="#8b8b8b" />
        <path d="M262 145.500 291 138 450.500 218 418 230Z" fill="#8b8b8b" />
        <path d="M189 176 211 167 262 145 268 147 215 169Z" fill="#4b4b4b" />
        <path d="M418 230 450.500 218 608.500 420 577.500 439Z" fill="#808080" />
        <path d="M577.500 439 608.500 420 833 562V612Z" fill="#8b8b8b" />
    </svg>
);

const NetworkEditor: React.FC<{ title: string; mode3d?: boolean }> = ({ title, mode3d }) => (
    <section className="flex flex-col min-h-0 min-w-0">
        <PanelHeader title={title} full />
        <EditorToolbar mode3d={mode3d} />
        <div className={mode3d ? 'relative flex-1 min-h-0 bg-[#d2d2d2]' : 'relative flex-1 min-h-0 bg-[#c0c0c0]'}>
            {mode3d ? <Network3d /> : <Network2d />}
            <TrafficLight />
        </div>
    </section>
);

/* ---------- list window ---------- */

const CheckBox: React.FC<{ label: string; checked: boolean }> = ({ label, checked }) => (
    <span className="relative block w-[13px] h-[13px] mx-auto">
        <input type="checkbox" aria-label={label} defaultChecked={checked} className="peer appearance-none block w-[13px] h-[13px] bg-white border border-[#8c8c8c]" />
        <svg viewBox="0 0 13 13" className="absolute top-0 left-0 w-[13px] h-[13px] hidden peer-checked:block pointer-events-none" fill="none" aria-hidden="true">
            <path d="m3.500 6 2 2.500L9.500 4" stroke="#000" strokeWidth="2" />
        </svg>
    </span>
);

const columns = [
    { name: 'No', width: 'w-[29px]' },
    { name: 'Name', width: 'w-[45px]' },
    { name: 'UseForEval', width: 'w-[70px]' },
    { name: 'UseForDynAssign', width: 'w-[105px]' },
    { name: 'UseForMeso', width: 'w-[78px]' },
    { name: 'Type', width: 'w-[62px]' },
    { name: 'ShowTurnValVisual', width: 'w-[112px]' },
    { name: 'TurnValVisualSize', width: 'w-[103px]' },
];

const types = ['Polygon', 'Segments', 'Polygon', 'Polygon', 'Polygon'];

const cell = 'border-r border-b border-[#b4b4b4] px-[2px] whitespace-nowrap';

const NodeTable = () => (
    <table className="w-[660px] ml-px mt-[2px] table-fixed border-separate border-spacing-0">
        <thead>
            <tr className="h-[21px]">
                <th scope="col" className={`${cell} w-[56px] font-normal text-right bg-white`}>Count: 5</th>
                {columns.map(col => (
                    <th key={col.name} scope="col" className={`${cell} ${col.width} font-normal text-left bg-[#dcdcdc]`}>{col.name}</th>
                ))}
            </tr>
        </thead>
        <tbody>
            {types.map((type, i) => {
                const selected = i === 1;
                return (
                    <tr key={i} className={selected ? 'h-5 bg-[#ffe8a6] text-black' : 'h-5 bg-white text-[#5a5a5a]'}>
                        <th scope="row" className={`${cell} font-normal text-right text-black ${selected ? 'bg-[#dcdcdc]' : 'bg-[#f0f0f0]'}`}>{i + 1}</th>
                        <td className={`${cell} text-right`}>{i + 1}</td>
                        <td className={cell}></td>
                        <td className={cell}><CheckBox label="UseForEval" checked /></td>
                        <td className={cell}><CheckBox label="UseForDynAssign" checked /></td>
                        <td className={cell}><CheckBox label="UseForMeso" checked={false} /></td>
                        <td className={cell}>{type}</td>
                        <td className={cell}><CheckBox label="ShowTurnValVisual" checked /></td>
                        <td className={`${cell} text-right`}>70,000</td>
                    </tr>
                );
            })}
        </tbody>
    </table>
);

const SegmentTable = () => (
    <table className="w-[195px] ml-px mt-[2px] table-fixed border-separate border-spacing-0">
        <thead>
            <tr className="h-[21px]">
                <th scope="col" className={`${cell} w-[56px] font-normal text-right bg-white`}>Count: 1</th>
                <th scope="col" className={`${cell} w-[35px] font-normal text-left bg-[#dcdcdc]`}>Link</th>
                <th scope="col" className={`${cell} w-[60px] font-normal text-left bg-[#dcdcdc]`}>FromPos</th>
                <th scope="col" className={`${cell} w-[44px] font-normal text-left bg-[#dcdcdc]`}>ToPos</th>
            </tr>
        </thead>
        <tbody>
            <tr className="h-5 bg-[#ffe8a6]">
                <th scope="row" className={`${cell} font-normal text-right bg-[#dcdcdc]`}>1</th>
                <td className="border-r border-b border-[#b4b4b4] pl-[2px]">
                    <span className="flex items-center justify-between">
                        1
                        <button aria-label="Choose link" className="w-[18px] h-[18px] flex items-center justify-center bg-[#eeeeee] border border-[#b0b0b0]">
                            <Icon box="0 0 8 6" className="w-2 h-[6px]"><path d="m.5 1 3.500 3.500L7.500 1" stroke="#555" /></Icon>
                        </button>
                    </span>
                </td>
                <td className={`${cell} text-right`}>133,119</td>
                <td className={cell}>155,2...</td>
            </tr>
        </tbody>
    </table>
);

const ListWindow = () => (
    <section className="h-[206px] flex flex-col bg-[#d6dbe9] shrink-0">
        <PanelHeader title="Nodes / Link Segments" />
        <div className="flex-1 grid grid-cols-[841fr_830fr] gap-[5px]">
            <div className="flex flex-col">
                <div className="h-[27px] flex items-center pl-px">
                    <Select label="List layout" value="Select layout..." width="w-[140px]" />
                    <Tool label="Attribute selection"><WrenchIcon /></Tool>
                    <Sep />
                    <Tool label="Edit"><PencilIcon /></Tool>
                    <Tool label="Delete"><DeleteIcon /></Tool>
                    <Tool label="Duplicate"><DuplicateIcon /></Tool>
                    <Sep />
                    <Tool label="Sort ascending"><SortIcon top="A" bottom="Z" /></Tool>
                    <Tool label="Sort descending"><SortIcon top="Z" bottom="A" up /></Tool>
                    <Tool label="Remove filter"><FilterIcon /></Tool>
                    <Tool label="Synchronize" active><SwapIcon /></Tool>
                    <Select label="Relation" value="Link segments" width="w-[123px]" />
                    <Tool label="Copy cells"><CopyIcon /></Tool>
                    <Tool label="Save to database"><DatabaseIcon /></Tool>
                    <Tool label="Save to file"><SaveIcon /></Tool>
                    <Tool label="Autosave"><SaveIcon arrow /></Tool>
                    <Sep />
                    <Tool label="Add attribute"><AttributesIcon /></Tool>
                </div>
                <div className="flex-1 bg-white border border-l-[#b4b4b4] border-[#5c5c5c]"><NodeTable /></div>
            </div>
            <div className="flex flex-col">
                <div className="h-[27px] flex items-center">
                    <Tool label="Attribute selection"><WrenchIcon /></Tool>
                    <Sep />
                    <Tool label="Sort ascending"><SortIcon top="A" bottom="Z" /></Tool>
                    <Tool label="Sort descending"><SortIcon top="Z" bottom="A" up /></Tool>
                    <Tool label="Remove filter"><FilterIcon /></Tool>
                </div>
                <div className="flex-1 bg-white border border-[#5c5c5c]"><SegmentTable /></div>
            </div>
        </div>
        <div role="tablist" className="h-[25px] pt-[3px] pl-[3px] flex shrink-0">
            <button role="tab" aria-selected="true" className="w-[137px] bg-[#ffefcb] text-[#1e1e1e]">Nodes / Link Segments</button>
            <button role="tab" className="w-[42px] bg-white text-[#444]">Edges</button>
        </div>
    </section>
);

const Cursor = () => (
    <svg viewBox="0 0 18 26" className="absolute top-[-4px] left-[1141px] w-[18px] h-[26px] pointer-events-none" aria-hidden="true">
        <path d="M.7-1v20.500l5-4.700 3.800 9.700c1 1.700 4 .4 3.600-1.200L9.200 14h7.500Z" fill="#fff" stroke="#000" />
    </svg>
);

const App: React.FC = () => {
    return (
        <div className="relative h-screen min-h-[700px] flex flex-col overflow-hidden bg-[#d6dbe9] text-[11px]/4 text-black cursor-default font-['Open_Sans','Segoe_UI',sans-serif]">
            <TitleBar />
            <MenuBar />
            <MainToolbar />
            <main className="flex-1 min-h-0 flex gap-[5px] bg-[#304362]">
                <aside className="w-[239px] flex flex-col gap-[5px] shrink-0">
                    <NetworkObjects />
                    <QuickView />
                </aside>
                <div className="flex-1 min-w-0 flex flex-col gap-[5px]">
                    <div className="flex-1 min-h-0 grid grid-cols-[838fr_833fr] gap-[5px]">
                        <NetworkEditor title="Network Editor (2)" />
                        <NetworkEditor title="Network Editor" mode3d />
                    </div>
                    <ListWindow />
                </div>
            </main>
            <footer className="h-[21px] flex items-center border-y border-[#45597c] pl-[3px] text-[#4a4a4a] shrink-0">
                <span className="w-[354px]">fov = 45.0</span>
                <span>System initialized!</span>
            </footer>
            <Cursor />
        </div>
    );
};

export default App;
